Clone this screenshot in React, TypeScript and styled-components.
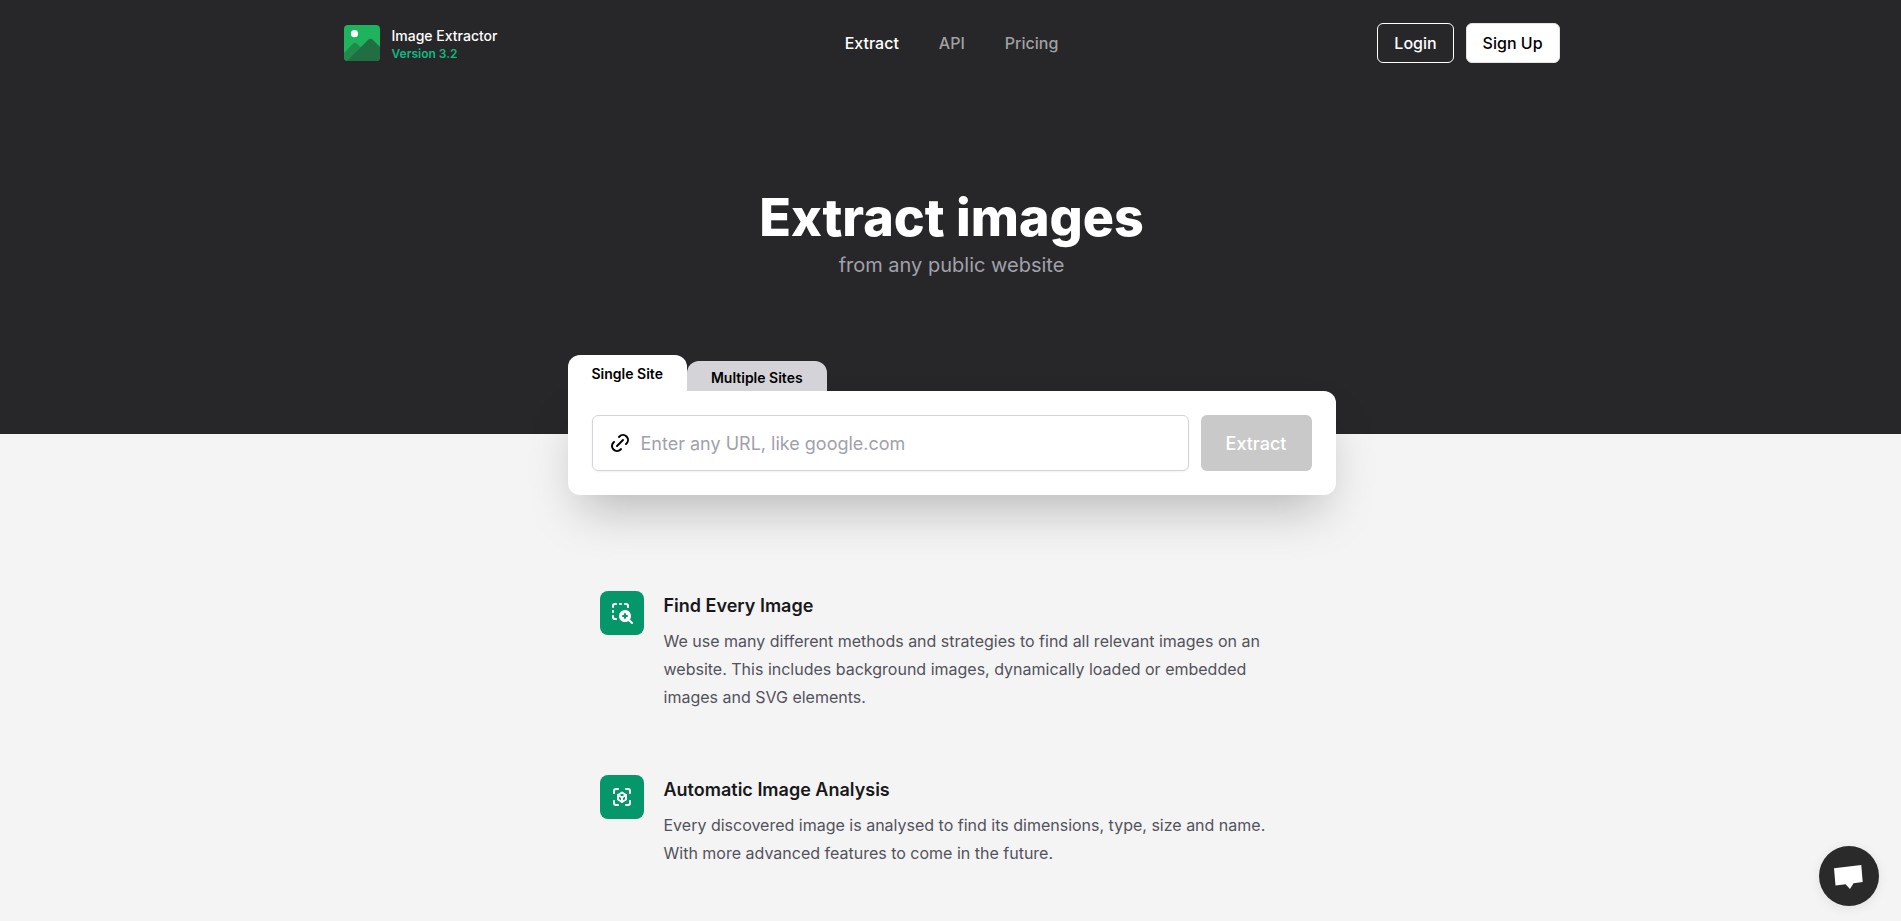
import React, { useState } from "react";
import styled, { createGlobalStyle } from "styled-components";
import { TbAugmentedReality, TbLink, TbZoomInAreaFilled } from "react-icons/tb";

const GlobalStyle = createGlobalStyle`
  *, *::before, *::after { box-sizing: border-box; }
  body {
    margin: 0;
    background: #f4f4f5;
    color: #18181b;
    font-family: Inter, "Liberation Sans", sans-serif;
    font-size: 16px;
    line-height: 24px;
  }
  button, input { font: inherit; }
  h1, h2, p { margin: 0; }
`;

const Top = styled.div`
  display: flow-root;
  background: #27272a;
  padding: 0 22px 0 24px;
`;

const Header = styled.header`
  display: flex;
  align-items: center;
  justify-content: space-between;
  max-width: 1216px;
  margin: 0 auto;
  padding: 23px 0;
`;

const Side = styled.div<{ $end?: boolean }>`
  display: flex;
  flex: 1;
  gap: 12px;
  justify-content: ${(p) => (p.$end ? "flex-end" : "flex-start")};
`;

const Brand = styled.a`
  display: flex;
  align-items: center;
  gap: 12px;
  text-decoration: none;
`;

const BrandText = styled.span`
  display: flex;
  flex-direction: column;
  padding-top: 2px;
`;

const BrandName = styled.span`
  color: #ffffff;
  font-size: 14px;
  font-weight: 500;
  line-height: 20px;
`;

const BrandVersion = styled.span`
  color: #10b981;
  font-size: 12px;
  font-weight: 600;
  line-height: 16px;
`;

const Nav = styled.nav`
  display: flex;
  gap: 40px;
`;

const NavLink = styled.a<{ $active?: boolean }>`
  color: ${(p) => (p.$active ? "#ffffff" : "#a1a1a1")};
  font-weight: 500;
  text-decoration: none;
`;

const AccountButton = styled.button<{ $solid?: boolean }>`
  height: 40px;
  padding: 0 16px;
  border: 1px solid ${(p) => (p.$solid ? "#e4e4e7" : "#ffffff")};
  border-radius: 6px;
  background: ${(p) => (p.$solid ? "#ffffff" : "transparent")};
  color: ${(p) => (p.$solid ? "#000000" : "#ffffff")};
  font-weight: 500;
  cursor: pointer;
`;

const Hero = styled.section`
  padding: 100px 0 75px;
  text-align: center;
`;

const HeroTitle = styled.h1`
  color: #ffffff;
  font-size: 52px;
  font-weight: 800;
  line-height: 64px;
`;

const HeroSubtitle = styled.p`
  color: #a1a1aa;
  font-size: 20px;
  line-height: 30px;
`;

const Extractor = styled.section`
  max-width: 768px;
  margin: 0 auto -61px;
`;

const TabList = styled.div`
  display: flex;
  align-items: flex-end;
`;

const Tab = styled.button<{ $active: boolean }>`
  height: ${(p) => (p.$active ? 36 : 30)}px;
  padding: ${(p) => (p.$active ? "2px 24px 0" : "4px 24px 0")};
  border: 0;
  border-radius: 12px 12px 0 0;
  background: ${(p) => (p.$active ? "#ffffff" : "#d4d4d8")};
  color: #000000;
  font-size: 14px;
  font-weight: 600;
  line-height: 20px;
  cursor: pointer;
`;

const Card = styled.form`
  display: flex;
  gap: 12px;
  padding: 24px;
  border-radius: 0 12px 12px 12px;
  background: #ffffff;
  box-shadow: 0 25px 50px -12px rgba(0, 0, 0, 0.25);
`;

const UrlField = styled.label`
  display: flex;
  flex: 1;
  align-items: center;
  gap: 9px;
  height: 56px;
  padding: 0 15px;
  border: 1px solid #d4d4d8;
  border-radius: 6px;
  color: #000000;
  box-shadow: 0 1px 2px rgba(0, 0, 0, 0.05);
`;

const UrlInput = styled.input`
  flex: 1;
  min-width: 0;
  padding: 2px 0 0;
  border: 0;
  outline: 0;
  background: transparent;
  color: #18181b;
  font-size: 18px;
  line-height: 28px;

  &::placeholder { color: #a1a1aa; opacity: 1; }
`;

const SubmitButton = styled.button`
  padding: 2px 24px 0;
  border: 1px solid transparent;
  border-radius: 6px;
  background: #27272a;
  color: #ffffff;
  font-size: 18px;
  font-weight: 500;

  &:disabled { background: #c9c9ca; }
`;

const Features = styled.main`
  display: flex;
  flex-direction: column;
  gap: 64px;
  padding: 157px 22px 26px 24px;
`;

const Feature = styled.article`
  display: flex;
  gap: 20px;
  width: 100%;
  max-width: 704px;
  margin: 0 auto;
  padding-right: 32px;
`;

const FeatureIcon = styled.span`
  display: flex;
  flex: none;
  align-items: center;
  justify-content: center;
  width: 44px;
  height: 44px;
  border-radius: 8px;
  background: #059669;
  color: #ffffff;
`;

const FeatureTitle = styled.h2`
  margin-bottom: 6px;
  font-size: 18px;
  font-weight: 600;
  line-height: 30px;
`;

const FeatureText = styled.p`
  color: #52525b;
  line-height: 28px;
`;

const ChatButton = styled.button`
  position: fixed;
  right: 22px;
  bottom: 15px;
  display: flex;
  align-items: center;
  justify-content: center;
  width: 60px;
  height: 60px;
  padding: 0;
  border: 0;
  border-radius: 50%;
  background: #2a2a2a;
  box-shadow: 0 2px 12px rgba(0, 0, 0, 0.08);
  cursor: pointer;
`;

const Logo = () => (
  <svg width="36" height="36" viewBox="0 0 36 36" aria-hidden="true">
    <defs>
      <clipPath id="logo-shape">
        <rect width="36" height="36" rx="4" />
      </clipPath>
    </defs>
    <g clipPath="url(#logo-shape)">
      <rect width="36" height="36" fill="#1fb35d" />
      <path d="M0 28 9 18.700Q11 17 13 18.700L22 28V36H0Z" fill="#208a4b" />
      <path d="M3 36 24.500 14.500Q26.500 13 28.500 14.500L36 22V36Z" fill="#226e43" />
      <circle cx="10.500" cy="8.700" r="3.600" fill="#ffffff" />
    </g>
  </svg>
);

const ChatIcon = () => (
  <svg width="60" height="60" viewBox="0 0 60 60" aria-hidden="true">
    <path d="M15 22.300 42.300 19 43.700 36 34.500 37.200 31 43 26.500 38.300 16.500 39.500Z" fill="#ffffff" />
  </svg>
);

const features = [
  {
    icon: TbZoomInAreaFilled,
    title: "Find Every Image",
    text: "We use many different methods and strategies to find all relevant images on an website. This includes background images, dynamically loaded or embedded images and SVG elements.",
  },
  {
    icon: TbAugmentedReality,
    title: "Automatic Image Analysis",
    text: "Every discovered image is analysed to find its dimensions, type, size and name. With more advanced features to come in the future.",
  },
];

const tabs = ["Single Site", "Multiple Sites"];

export default function App() {
  const [tab, setTab] = useState(0);
  const [url, setUrl] = useState("");

  return (
    <>
      <GlobalStyle />
      <Top>
        <Header>
          <Side>
            <Brand href="#">
              <Logo />
              <BrandText>
                <BrandName>Image Extractor</BrandName>
                <BrandVersion>Version 3.2</BrandVersion>
              </BrandText>
            </Brand>
          </Side>
          <Nav>
            <NavLink href="#extract" $active>Extract</NavLink>
            <NavLink href="#api">API</NavLink>
            <NavLink href="#pricing">Pricing</NavLink>
          </Nav>
          <Side $end>
            <AccountButton type="button">Login</AccountButton>
            <AccountButton type="button" $solid>Sign Up</AccountButton>
          </Side>
        </Header>
        <Hero>
          <HeroTitle>Extract images</HeroTitle>
          <HeroSubtitle>from any public website</HeroSubtitle>
        </Hero>
        <Extractor>
          <TabList role="tablist">
            {tabs.map((name, i) => (
              <Tab
                key={name}
                type="button"
                role="tab"
                aria-selected={tab === i}
                $active={tab === i}
                onClick={() => setTab(i)}
              >
                {name}
              </Tab>
            ))}
          </TabList>
          <Card onSubmit={(e) => e.preventDefault()}>
            <UrlField>
              <TbLink size={24} aria-hidden="true" />
              <UrlInput
                type="text"
                aria-label="Website URL"
                placeholder="Enter any URL, like google.com"
                value={url}
                onChange={(e) => setUrl(e.target.value)}
              />
            </UrlField>
            <SubmitButton type="submit" disabled={!url}>Extract</SubmitButton>
          </Card>
        </Extractor>
      </Top>
      <Features>
        {features.map(({ icon: Icon, title, text }) => (
          <Feature key={title}>
            <FeatureIcon>
              <Icon size={24} aria-hidden="true" />
            </FeatureIcon>
            <div>
              <FeatureTitle>{title}</FeatureTitle>
              <FeatureText>{text}</FeatureText>
            </div>
          </Feature>
        ))}
      </Features>
      <ChatButton type="button" aria-label="Open chat">
        <ChatIcon />
      </ChatButton>
    </>
  );
}
